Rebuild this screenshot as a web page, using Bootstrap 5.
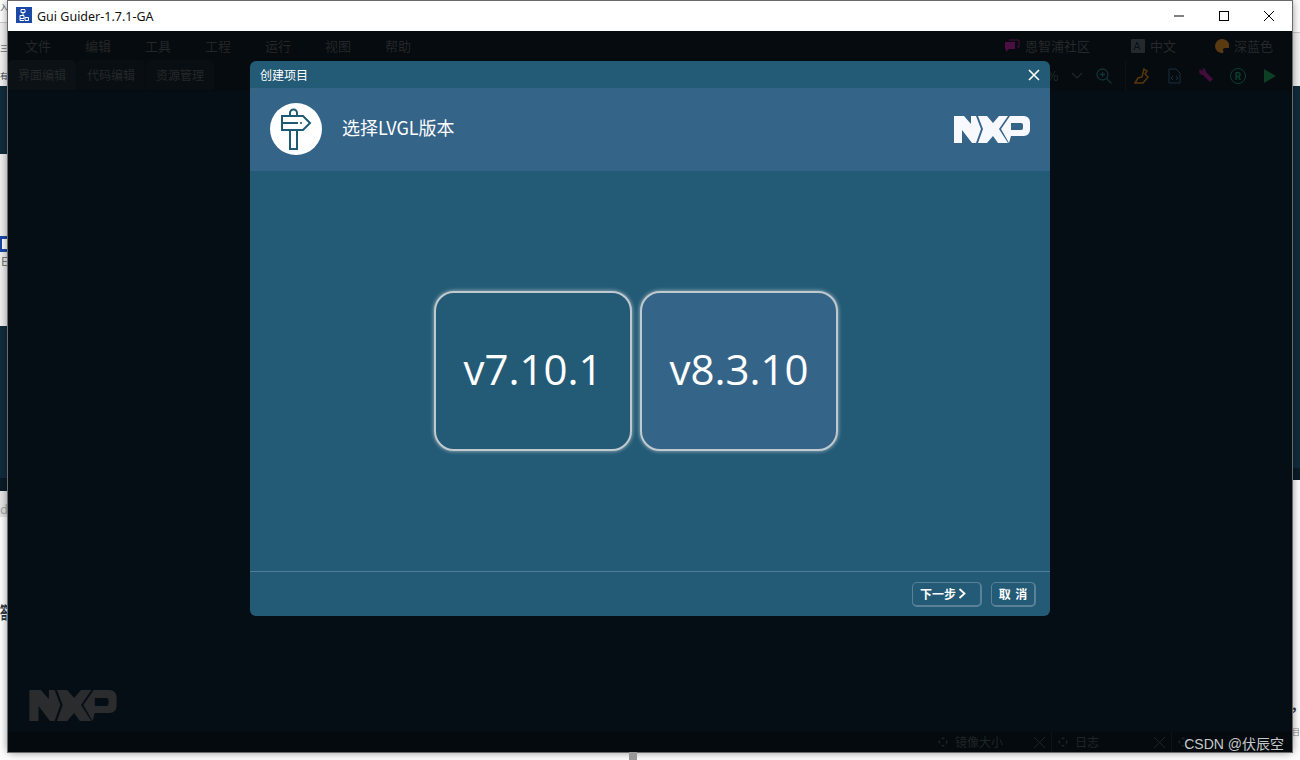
<!DOCTYPE html>
<html lang="zh">
<head>
<meta charset="utf-8">
<title>Gui Guider</title>
<link href="https://cdn.jsdelivr.net/npm/bootstrap@5.3.0/dist/css/bootstrap.min.css" rel="stylesheet">
<style>
html,body{height:760px;overflow:hidden;}
body{background:#fff;font-family:"Noto Sans CJK SC","Liberation Sans",sans-serif;position:relative;}
.win{position:absolute;left:8px;top:1px;width:1284px;height:751px;box-shadow:0 0 9px rgba(0,0,0,.5);outline:1px solid #6a6a6a;background:#060e15;}
.win-title{height:30px;background:#fff;color:#111;font:12.5px "Noto Sans","Liberation Sans",sans-serif;flex:none;}
.app-logo{width:16px;height:16px;margin-left:8px;margin-right:5px;margin-bottom:2px;display:block;}
.win-btn{width:45px;height:30px;}
.win-btn.last{width:46px;}
.menu-row{height:29px;color:#242628;font-size:13px;padding-left:17px;background:#050b0f;flex:none;}
.mi{width:60px;}
.menu-right{color:#26292b;font-size:13px;}
.mr-ico{margin-right:5px;}
.mr-a{width:106px;}.mr-b{width:65px;}.mr-c{width:58px;}
.tool-row{height:31px;background:#050b0f;flex:none;}
.tabx{width:68px;height:30px;background:#090e12;border-radius:5px 5px 0 0;color:#25282a;font-size:12px;margin-right:1px;}
.tabx.first{background:#0b1115;}
.tools{color:#24282a;font-size:13px;padding-right:6px;}
.tl{width:32px;height:30px;}
.tl-p{width:21px;}
.tl-n{width:27px;}
.tl-z{width:27px;margin-right:8px;}
.tsep{width:1px;height:30px;background:#0b1318;}
.r-mark{width:16px;height:16px;border:1.500px solid #0b3e30;border-radius:50%;color:#0b3e30;font-size:10px;font-weight:700;}
.work{position:relative;}
.wm{position:absolute;left:20px;bottom:11px;}
.dock{height:20px;background:#040a0e;color:#212527;font-size:12px;flex:none;}
.dk{width:120px;height:20px;padding-left:6px;border-right:1px solid #0d1418;}
.dk-end{border-right:0;}
.dk-x{margin-left:auto;margin-right:6px;}
.dk-ico{margin-right:7px;}
.dlg{position:absolute;left:250px;top:61px;width:800px;height:555px;background:#235a75;border-radius:6px;color:#fff;}
.dlg-top{height:27px;padding:0 10px;font-size:12px;flex:none;}
.dlg-head{height:83px;background:#356489;padding:0 20px;flex:none;}
.circle{width:52px;height:52px;border-radius:50%;background:#fff;display:block;margin-bottom:1px;}
.dlg-h{font-size:18px;margin-left:20px;padding-bottom:5px;}
.ver{width:198px;height:160px;border-radius:20px;border:2px solid #bfc9ce;box-shadow:0 0 4px rgba(255,255,255,.6);font:42px "Open Sans","Noto Sans",sans-serif;padding-bottom:5px;}
.ver.alt{background:#356489;}
.ver.plain{background:#235a75;}
.dlg-body{height:400px;gap:8px;padding-right:28px;flex:none;}
.dlg-foot{height:45px;border-top:1px solid #4e7e96;padding:0 14px 0 0;gap:9px;flex:none;}
.fbtn{height:25px;border:1px solid #5a8198;border-right-width:2px;border-bottom-width:2px;border-radius:5px;font-size:12px;font-weight:700;color:#fff;}
.fb-next{width:70px;padding-left:7px;}
.fb-next svg{margin-left:2px;}
.fb-cancel{width:45px;word-spacing:2px;}
.wtmk{position:absolute;right:16px;top:733px;font:14px "Liberation Sans","Noto Sans CJK SC",sans-serif;color:#c4c8ca;}
.tbar{position:absolute;left:629px;top:752px;width:8px;height:8px;background:#999;}
.rbar,.lbar{position:absolute;top:0;width:8px;height:760px;background:#fff;overflow:hidden;}
.lbar{left:0;}.rbar{left:1292px;}
.seg{position:absolute;left:0;width:8px;}
.clip{position:absolute;left:0;white-space:nowrap;line-height:1;font-size:8px;}
.tall{transform:scaleY(2.2);transform-origin:top left;font-weight:700;color:#234;}
</style>
</head>
<body>
<svg width="0" height="0" class="position-absolute">
 <symbol id="nxp" viewBox="0 0 76 27">
  <path fill-rule="evenodd" d="M0 0H10L17 8V0H22L27 13 22 27H18L8 14V27H0ZM24 0H33L39 7 45 0H54L45 13 54 27H44L39 20 33 27H24L29 13ZM56 0H70A6 6 0 0 1 76 6V14A6 6 0 0 1 70 20H57L55 27 47 13ZM57 7H67A2 2 0 0 1 69 9V12A2 2 0 0 1 67 14H57Z"/>
 </symbol>
</svg>
<div class="lbar">
 <div class="seg" style="top:22px;height:1px;background:#ccc"></div>
 <div class="seg" style="top:23px;height:63px;background:#f2f2f2"></div>
 <div class="clip" style="top:3px;color:#456">入</div>
 <div class="clip" style="top:44px;color:#333">三</div>
 <div class="clip" style="top:72px;color:#345">有</div>
 <div class="seg" style="top:86px;height:68px;background:#112c3d"></div>
 <div class="seg" style="top:154px;height:172px;background:#f0f0f0"></div>
 <div class="seg" style="top:236px;height:16px;background:#1c48a6"></div>
 <div class="seg" style="top:239px;left:2px;height:10px;background:#fff"></div>
 <div class="clip" style="top:255px;left:1px;font-size:12px;color:#777">E</div>
 <div class="seg" style="top:326px;height:152px;background:#112c3d"></div>
 <div class="seg" style="top:478px;height:13px;background:#0a1c28"></div>
 <div class="seg" style="top:491px;height:26px;background:#e6e6e6"></div>
 <div class="clip" style="top:502px;font-size:13px;color:#aaa">d</div>
 <div class="clip tall" style="top:604px">答</div>
</div>
<div class="rbar">
 <div class="seg" style="top:32px;height:1px;background:#ccc"></div>
 <div class="seg" style="top:33px;height:53px;background:#f3f3f3"></div>
 <div class="seg" style="top:86px;height:382px;background:#112c3d"></div>
 <div class="seg" style="top:468px;height:12px;background:#0a1c28"></div>
 <div class="clip" style="top:697px;font-size:14px;font-weight:700;color:#333">,</div>
 <div class="clip" style="top:728px;color:#888">目</div>
</div>
<div class="win d-flex flex-column">
 <div class="win-title d-flex align-items-center">
  <svg class="app-logo" viewBox="0 0 16 16"><rect width="16" height="16" fill="#1c48a6"/><path d="M5 2.500h4v3H5zM7 5.500v3M4 8.500h4v3H4zM9 10.500h3.500v3H9zM4 11.500v2h4" fill="none" stroke="#fff"/></svg>
  <span class="flex-grow-1">Gui Guider-1.7.1-GA</span>
  <div class="win-btn d-flex align-items-center justify-content-center"><svg width="12" height="12"><path d="M1 6h10" stroke="#000"/></svg></div>
  <div class="win-btn d-flex align-items-center justify-content-center"><svg width="12" height="12"><rect x="1.500" y="1.500" width="9" height="9" fill="none" stroke="#000"/></svg></div>
  <div class="win-btn last d-flex align-items-center justify-content-center"><svg width="12" height="12"><path d="M1 1l10 10M11 1L1 11" stroke="#000"/></svg></div>
 </div>
 <div class="menu-row d-flex align-items-center">
  <span class="mi">文件</span><span class="mi">编辑</span><span class="mi">工具</span><span class="mi">工程</span><span class="mi">运行</span><span class="mi">视图</span><span class="mi">帮助</span>
  <div class="ms-auto menu-right d-flex align-items-center">
   <svg class="mr-ico" width="16" height="14" viewBox="0 0 16 14"><path d="M1 3h10v7H5l-3 3v-3H1z" fill="#4b0f44"/><path d="M5 1h10v7h-2" fill="none" stroke="#4b0f44"/></svg><span class="mr-a">恩智浦社区</span>
   <svg class="mr-ico" width="14" height="14" viewBox="0 0 14 14"><rect width="14" height="14" rx="1" fill="#23292d"/><path d="M3 11l3-8 3 8M4.200 8.500h3.600" fill="none" stroke="#07101a"/></svg><span class="mr-b">中文</span>
   <svg class="mr-ico" width="14" height="14" viewBox="0 0 14 14"><path d="M7 0a7 7 0 0 0 0 14c2 0 1.500-2 1-3s1-2 2.500-2H14A7 7 0 0 0 7 0z" fill="#5a3a10"/></svg><span class="mr-c">深蓝色</span>
  </div>
 </div>
 <div class="tool-row d-flex">
  <div class="tabx first d-flex align-items-center justify-content-center">界面编辑</div>
  <div class="tabx d-flex align-items-center justify-content-center">代码编辑</div>
  <div class="tabx d-flex align-items-center justify-content-center">资源管理</div>
  <div class="ms-auto tools d-flex align-items-center">
   <div class="tl tl-p d-flex align-items-center justify-content-center">%</div>
   <div class="tl tl-n d-flex align-items-center justify-content-center"><svg width="12" height="8"><path d="M1 1l5 5 5-5" fill="none" stroke="#20282c" stroke-width="1.200"/></svg></div>
   <div class="tl tl-z d-flex align-items-center justify-content-center"><svg width="16" height="16"><circle cx="6.500" cy="6.500" r="5.500" fill="none" stroke="#163232" stroke-width="1.300"/><path d="M4 6.500h5M6.500 4v5M10.500 10.500l5 5" stroke="#163232" stroke-width="1.300"/></svg></div>
   <div class="tsep"></div>
   <div class="tl d-flex align-items-center justify-content-center"><svg width="16" height="16"><path d="M10 1l3 2-2 3 3 3-5 6H1l3-5 4-1z" fill="none" stroke="#583809" stroke-width="1.500"/></svg></div>
   <div class="tl d-flex align-items-center justify-content-center"><svg width="13" height="16"><path d="M1 1h7l4 4v10H1z" fill="none" stroke="#1c2f3c"/><path d="M5 8l-2 2 2 2M8 8l2 2-2 2" fill="none" stroke="#1c2f3c"/></svg></div>
   <div class="tl d-flex align-items-center justify-content-center"><svg width="16" height="16"><path d="M2 1l2 2 1-1-1-2c2 0 4 1 4 4l7 7-3 3-7-7C2 7 0 4 2 1z" fill="#420d3b"/></svg></div>
   <div class="tl d-flex align-items-center justify-content-center"><span class="r-mark d-flex align-items-center justify-content-center">R</span></div>
   <div class="tl d-flex align-items-center justify-content-center"><svg width="12" height="14"><path d="M0 0l12 7-12 7z" fill="#0d3f24"/></svg></div>
  </div>
 </div>
 <div class="work flex-grow-1">
  <svg class="wm" width="90" height="31" fill="#2a2c2e"><use href="#nxp"/></svg>
 </div>
 <div class="dock d-flex align-items-center justify-content-end">
  <div class="dk d-flex align-items-center"><svg class="dk-ico" width="10" height="10"><path d="M5 0l2 2H3zM5 10l2-2H3zM0 5l2-2v4zM10 5l-2-2v4z" fill="#1e2326"/></svg><span>镜像大小</span><svg class="dk-x" width="11" height="11"><path d="M0 0l11 11M11 0L0 11" stroke="#1e2326"/></svg></div>
  <div class="dk d-flex align-items-center"><svg class="dk-ico" width="10" height="10"><path d="M5 0l2 2H3zM5 10l2-2H3zM0 5l2-2v4zM10 5l-2-2v4z" fill="#1e2326"/></svg><span>日志</span><svg class="dk-x" width="11" height="11"><path d="M0 0l11 11M11 0L0 11" stroke="#1e2326"/></svg></div>
  <div class="dk dk-end d-flex align-items-center"><svg class="dk-ico" width="10" height="10"><path d="M5 0l2 2H3zM5 10l2-2H3zM0 5l2-2v4zM10 5l-2-2v4z" fill="#1e2326"/></svg></div>
 </div>
</div>
<div class="dlg d-flex flex-column">
 <div class="dlg-top d-flex align-items-center justify-content-between">
  <span>创建项目</span>
  <svg width="12" height="12"><path d="M1 1l10 10M11 1L1 11" stroke="#fff" stroke-width="1.600"/></svg>
 </div>
 <div class="dlg-head d-flex align-items-center">
  <svg class="circle" viewBox="0 0 52 52"><g fill="none" stroke="#1f5a75" stroke-width="2"><path d="M12 13H33L40 20 33 27H12Z"/><path d="M20 13V10A3.500 3.500 0 0 1 27 10V13"/><path d="M20 27V46H27V27"/><path d="M12 20H28"/></g><circle cx="31" cy="20" r="1" fill="#1f5a75"/></svg>
  <span class="dlg-h flex-grow-1">选择LVGL版本</span>
  <svg width="76" height="27" fill="#f8f8ff"><use href="#nxp"/></svg>
 </div>
 <div class="dlg-body d-flex align-items-center justify-content-center">
  <div class="ver plain d-flex align-items-center justify-content-center">v7.10.1</div>
  <div class="ver alt d-flex align-items-center justify-content-center">v8.3.10</div>
 </div>
 <div class="dlg-foot d-flex align-items-center justify-content-end">
  <div class="fbtn fb-next d-flex align-items-center">下一步<svg width="8" height="11"><path d="M1.500 1l5 4.500-5 4.500" fill="none" stroke="#fff" stroke-width="1.800"/></svg></div>
  <div class="fbtn fb-cancel d-flex align-items-center justify-content-center">取 消</div>
 </div>
</div>
<div class="wtmk">CSDN @伏辰空</div>
<div class="tbar"></div>
<script src="https://cdn.jsdelivr.net/npm/bootstrap@5.3.0/dist/js/bootstrap.bundle.min.js"></script>
</body>
</html>
